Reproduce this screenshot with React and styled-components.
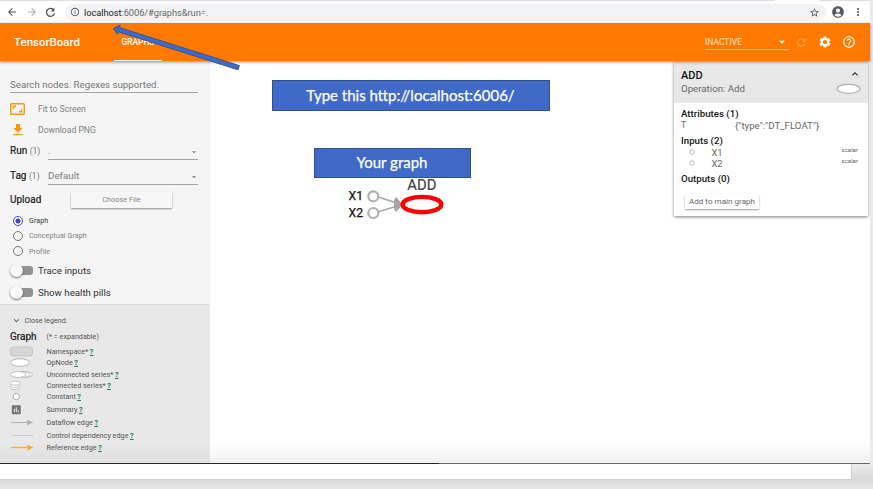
import React from 'react';
import styled, { createGlobalStyle } from 'styled-components';
import { MdSettings, MdHelpOutline, MdRefresh, MdAccountCircle, MdStarBorder, MdMoreVert, MdArrowBack, MdArrowForward, MdInfoOutline, MdFileDownload, MdKeyboardArrowDown, MdKeyboardArrowUp, MdArrowDropDown, MdAssessment } from 'react-icons/md';

const GlobalStyle = createGlobalStyle`
  * { box-sizing: border-box; }
  body { margin: 0; font-family: Roboto, sans-serif; background: #e4e4e4; overflow: hidden; }
  svg { display: block; flex: none; }
`;

const Desktop = styled.div`
  width: 873px;
  height: 489px;
  background: linear-gradient(#ebebeb 0 465px, #d9d9d9 478px, #e7e7e7 489px);
`;
const BrowserWindow = styled.div`
  position: relative;
  display: flex;
  flex-direction: column;
  width: 870px;
  height: 464px;
  background: #fff;
`;
const WindowEdge = styled.div`
  height: 1px;
  flex: none;
  background: linear-gradient(90deg, #26262c 0 439px, #6b6b6b 439px);
`;
const LowerSheet = styled.div`
  width: 852px;
  height: 16px;
  background: #fff;
  border-right: 1px solid #d0d0d0;
  border-bottom: 1px solid #cfcfcf;
`;

const TabStrip = styled.div`
  height: 1px;
  flex: none;
  background: linear-gradient(90deg, #dee0e6 0 775px, #fff 775px 820px, #dee0e6 820px);
`;
const AddressBar = styled.div`
  display: flex;
  align-items: center;
  height: 22px;
  flex: none;
  padding: 0 5px 0 6px;
  color: #55585c;
`;
const NavButton = styled.span`
  width: 19.5px;
  color: ${(p) => (p.$muted ? '#a9abae' : '#505357')};
`;
const UrlField = styled.div`
  display: flex;
  align-items: center;
  width: 761px;
  height: 17px;
  padding: 0 6px 0 5px;
  border-radius: 9px;
  background: #f1f3f4;
`;
const Url = styled.span`
  flex: 1;
  margin-left: 4.5px;
  font-size: 9.3px;
  letter-spacing: -0.06px;
  color: #65686c;
  b { font-weight: 400; color: #222428; }
`;
const BrowserActions = styled.div`
  display: flex;
  align-items: center;
  margin-left: 5px;
  gap: 7px;
`;

const AppHeader = styled.header`
  display: flex;
  align-items: center;
  height: 38px;
  flex: none;
  padding: 0 14px;
  background: #ff7800;
  color: #fff;
  box-shadow: 0 1px 3px rgba(0, 0, 0, 0.45);
  z-index: 1;
`;
const Brand = styled.div`
  width: 100px;
  font-size: 11.5px;
  font-weight: 500;
`;
const Tab = styled.div`
  width: 48px;
  height: 38px;
  line-height: 38px;
  text-align: center;
  font-size: 8.4px;
  font-weight: 500;
  border-bottom: 1.5px solid #fff;
`;
const StatusSelect = styled.div`
  display: flex;
  align-items: center;
  justify-content: space-between;
  width: 84px;
  height: 16px;
  margin-left: auto;
  padding-top: 1px;
  border-bottom: 1px solid #ffc999;
  font-size: 8.5px;
  color: #ffe4cc;
  svg { color: #fff; }
`;
const HeaderIcons = styled.div`
  display: flex;
  align-items: center;
  gap: 10px;
  margin: 0 0 0 6px;
  svg:first-child { opacity: 0.35; }
`;

const Body = styled.main`
  display: flex;
  flex: 1;
  min-height: 0;
`;
const Sidebar = styled.aside`
  width: 210px;
  flex: none;
  background: #f5f5f5;
`;
const Controls = styled.section`
  height: 243px;
  padding: 15px 12px 0 10px;
`;
const SearchField = styled.div`
  height: 17px;
  border-bottom: 1px solid #a3a3a3;
  font-size: 9.7px;
  line-height: 17px;
  color: #777;
`;
const ActionRow = styled.div`
  display: flex;
  align-items: center;
  height: 21px;
  color: #808080;
  font-size: 8.6px;
  & > span:first-child { width: 28px; color: #ff9800; }
`;
const Actions = styled.div`
  height: 42px;
  padding-top: 5px;
`;
const SelectRow = styled.div`
  display: flex;
  align-items: flex-end;
  height: 25px;
`;
const FieldLabel = styled.div`
  width: 38px;
  padding-bottom: 3px;
  font-size: 10px;
  line-height: 12px;
  color: #212121;
  -webkit-text-stroke: 0.2px;
  small { font-size: 8.5px; color: #777; -webkit-text-stroke: 0; }
`;
const SelectBox = styled.div`
  display: flex;
  flex: 1;
  align-items: center;
  justify-content: space-between;
  height: 17px;
  border-bottom: 1px solid #a3a3a3;
  font-size: 9.8px;
  line-height: 16px;
  color: #808080;
  svg { margin: 2px -1px 0 0; }
`;
const UploadRow = styled.div`
  display: flex;
  align-items: center;
  height: 16px;
  margin-top: 6.5px;
  font-size: 10px;
  color: #212121;
  -webkit-text-stroke: 0.2px;
  & > span { width: 61px; }
`;
const FileButton = styled.button`
  width: 101px;
  height: 16px;
  padding: 0;
  border: 0;
  border-radius: 1px;
  background: #f7f7f7;
  box-shadow: 0 1px 2px rgba(0, 0, 0, 0.42);
  font: 7.2px Roboto, sans-serif;
  letter-spacing: 0.1px;
  color: #858585;
  -webkit-text-stroke: 0;
`;
const RadioGroup = styled.div`
  padding: 5.5px 0 0 3px;
`;
const RadioOption = styled.div`
  display: flex;
  align-items: center;
  gap: 6px;
  height: 15.3px;
  font-size: 7.1px;
  letter-spacing: 0.08px;
  color: ${(p) => (p.$on ? '#333' : '#808080')};
`;
const RadioMark = styled.span`
  width: 10px;
  height: 10px;
  border-radius: 50%;
  border: 1.2px solid ${(p) => (p.$on ? '#4246c8' : '#777')};
  background: ${(p) => (p.$on ? 'radial-gradient(circle, #4246c8 0 2.2px, #fff 2.9px)' : 'transparent')};
`;
const ToggleRow = styled.div`
  display: flex;
  align-items: center;
  height: 22.5px;
  gap: 5px;
  font-size: 9.7px;
  color: #303030;
`;
const Track = styled.span`
  display: flex;
  align-items: center;
  width: 20px;
  height: 9px;
  margin-left: 3px;
  border-radius: 3px;
  background: #929292;
`;
const Knob = styled.span`
  width: 13px;
  height: 13px;
  margin-left: -3px;
  border-radius: 50%;
  background: #fafafa;
  box-shadow: 0 1px 2px rgba(0, 0, 0, 0.55);
`;

const Legend = styled.section`
  height: 159px;
  padding: 7px 10px;
  border-top: 1px solid #dadada;
  background: linear-gradient(#e8e8e8 0 138px, #dedede);
  color: #555;
  font-size: 7.2px;
`;
const LegendToggle = styled.div`
  display: flex;
  align-items: center;
  gap: 2.5px;
  height: 16px;
  padding-left: 1px;
`;
const LegendHeading = styled.div`
  display: flex;
  align-items: center;
  height: 16px;
  margin-bottom: 2px;
  strong { width: 36.5px; font-size: 10px; font-weight: 400; color: #212121; -webkit-text-stroke: 0.2px; }
`;
const LegendRow = styled.div`
  display: flex;
  align-items: center;
  height: ${(p) => p.$h}px;
  font-size: 7.25px;
  svg { margin-right: 11.5px; }
  u { margin-left: 1.5px; color: #1f7a4d; font-weight: 700; }
`;

const Canvas = styled.section`
  position: relative;
  flex: 1;
  background: linear-gradient(#fff 0 380px, #f1f1f1);
`;
const GraphDrawing = styled.svg`
  position: absolute;
  left: 130px;
  top: 115px;
  font-family: Roboto, sans-serif;
`;
const Callout = styled.div`
  position: absolute;
  left: ${(p) => p.$x}px;
  top: ${(p) => p.$y}px;
  width: ${(p) => p.$w}px;
  height: ${(p) => p.$h}px;
  line-height: ${(p) => p.$h - 3}px;
  padding-right: 1px;
  text-align: center;
  border: 1px solid #2f528f;
  background: #4169c8;
  color: #fff;
  font-family: Lato, sans-serif;
  font-size: 15px;
  -webkit-text-stroke: 0.25px;
`;
const ArrowOverlay = styled.svg`
  position: absolute;
  left: 108px;
  top: 20px;
  z-index: 2;
`;

const InfoCard = styled.article`
  position: absolute;
  right: 2px;
  top: 1px;
  width: 194px;
  height: 154px;
  background: #fff;
  box-shadow: 0 1px 3px rgba(0, 0, 0, 0.5);
  color: #666;
  font-size: 9px;
`;
const CardHeader = styled.header`
  display: flex;
  justify-content: space-between;
  height: 41px;
  padding: 7px 7px 0;
  background: #e8e8e8;
`;
const NodeTitle = styled.div`
  font-size: 9.7px;
  line-height: 13px;
  h2 { margin: 0; font-size: 11px; font-weight: 500; line-height: 13px; color: #151515; }
`;
const HeaderShapes = styled.div`
  display: flex;
  flex-direction: column;
  align-items: flex-end;
  svg:first-child { margin: -1px 0 3px; color: #222; }
`;
const CardBody = styled.div`
  padding: 4.5px 10px 0 7px;
`;
const GroupTitle = styled.h3`
  margin: ${(p) => p.$top || 0}px 0 0;
  font-size: 9.7px;
  line-height: 12px;
  font-weight: 500;
  color: #151515;
`;
const AttributeRow = styled.div`
  display: flex;
  line-height: 11px;
  font-size: 9.7px;
  span:first-child { width: 54px; font-size: 8.8px; }
`;
const InputRow = styled.div`
  display: flex;
  align-items: center;
  height: 11px;
  padding-left: 8px;
  font-size: 9.3px;
  span { margin-left: 16.5px; }
  small { margin-left: auto; padding-bottom: 5px; font-size: 6.1px; }
`;
const AddButton = styled.button`
  display: block;
  width: 74px;
  height: 15px;
  margin: 9px 0 0 4px;
  padding: 0;
  border: 0;
  border-radius: 1px;
  background: #fff;
  box-shadow: 0 1px 2px rgba(0, 0, 0, 0.38);
  font: 8.1px Roboto, sans-serif;
  color: #666;
`;

const ReloadIcon = () => (
  <svg width="11" height="11" viewBox="0 0 11 11" fill="none" stroke="currentColor" strokeWidth="1.3">
    <path d="M8.8 3.1A4 4 0 1 0 9.4 6.3" /><path d="M9.4 .8V4.5H5.7Z" fill="currentColor" stroke="none" />
  </svg>
);
const FitIcon = () => (
  <svg width="15" height="12" viewBox="0 0 15 12" fill="none" stroke="currentColor" strokeWidth="1.4">
    <rect x=".7" y=".7" width="13.6" height="10.6" rx="1" />
    <path d="M3.5 5.8V3.2H6M9 8.8h2.6V6.2" strokeWidth="1.5" />
  </svg>
);

const shapes = {
  namespace: <rect x=".5" y="1" width="22" height="9" rx="3" fill="#d6d6d6" stroke="#c4c4c4" />,
  op: <ellipse cx="10" cy="5.5" rx="9.3" ry="3.8" fill="#fff" stroke="#b5b5b5" />,
  unconnected: <g fill="#fff" stroke="#b5b5b5" strokeWidth=".9"><ellipse cx="15.5" cy="5.5" rx="7" ry="2.9" /><ellipse cx="12" cy="5.5" rx="8" ry="2.9" /><ellipse cx="8.2" cy="5.5" rx="7.7" ry="2.9" /></g>,
  connected: <g fill="#fff" stroke="#b5b5b5" strokeWidth=".8"><ellipse cx="5.3" cy="7.6" rx="4.9" ry="2" /><ellipse cx="5.3" cy="5.4" rx="4.9" ry="2" /><ellipse cx="5.3" cy="3.2" rx="4.9" ry="2" /></g>,
  constant: <circle cx="6.3" cy="5.5" r="3.2" fill="#fff" stroke="#aaa" />,
  summary: <MdAssessment x="0.3" y="-.3" size={12} color="#757575" />,
  dataflow: <g fill="#b5b5b5"><path d="M1 5.5H18" stroke="#b5b5b5" /><path d="M17 2.5 23.2 5.5 17 8.5Z" /></g>,
  control: <path d="M1.5 5.5H23" stroke="#bdbdbd" strokeDasharray="1.6 1" />,
  reference: <g fill="#ffae1a"><path d="M1 5.5H18" stroke="#ffae1a" strokeWidth="1.3" /><path d="M16.5 2.3 23.5 5.5 16.5 8.7 18 5.5Z" /></g>,
};
const legendItems = [
  ['namespace', 'Namespace*', 11], ['op', 'OpNode', 11.5], ['unconnected', 'Unconnected series*', 11],
  ['connected', 'Connected series*', 11], ['constant', 'Constant', 12], ['summary', 'Summary', 13.5],
  ['dataflow', 'Dataflow edge', 13], ['control', 'Control dependency edge', 12], ['reference', 'Reference edge', 13],
];

function GraphControls() {
  return (
    <Controls>
      <SearchField>Search nodes. Regexes supported.</SearchField>
      <Actions>
        <ActionRow><span><FitIcon /></span>Fit to Screen</ActionRow>
        <ActionRow><span><MdFileDownload size={16} /></span>Download PNG</ActionRow>
      </Actions>
      <SelectRow>
        <FieldLabel>Run <small>(1)</small></FieldLabel>
        <SelectBox>.<MdArrowDropDown size={10} /></SelectBox>
      </SelectRow>
      <SelectRow>
        <FieldLabel>Tag <small>(1)</small></FieldLabel>
        <SelectBox>Default<MdArrowDropDown size={10} /></SelectBox>
      </SelectRow>
      <UploadRow><span>Upload</span><FileButton>Choose File</FileButton></UploadRow>
      <RadioGroup>
        {['Graph', 'Conceptual Graph', 'Profile'].map((name, i) => (
          <RadioOption key={name} $on={i === 0}><RadioMark $on={i === 0} />{name}</RadioOption>
        ))}
      </RadioGroup>
      {['Trace inputs', 'Show health pills'].map((name) => (
        <ToggleRow key={name}><Track><Knob /></Track>{name}</ToggleRow>
      ))}
    </Controls>
  );
}

function GraphLegend() {
  return (
    <Legend>
      <LegendToggle><MdKeyboardArrowDown size={11} />Close legend.</LegendToggle>
      <LegendHeading><strong>Graph</strong>(* = expandable)</LegendHeading>
      {legendItems.map(([kind, label, h]) => (
        <LegendRow key={kind} $h={h}>
          <svg width="25" height="11" viewBox="0 0 25 11">{shapes[kind]}</svg>
          {label}<u>?</u>
        </LegendRow>
      ))}
    </Legend>
  );
}

function NodeInfo() {
  return (
    <InfoCard>
      <CardHeader>
        <NodeTitle><h2>ADD</h2>Operation: Add</NodeTitle>
        <HeaderShapes>
          <MdKeyboardArrowUp size={12} />
          <svg width="25" height="11" viewBox="0 0 25 11"><ellipse cx="12.5" cy="5.8" rx="11.5" ry="4.5" fill="#fff" stroke="#b0b0b0" strokeWidth="1.2" /></svg>
        </HeaderShapes>
      </CardHeader>
      <CardBody>
        <GroupTitle>Attributes (1)</GroupTitle>
        <AttributeRow><span>T</span><span>{'{"type":"DT_FLOAT"}'}</span></AttributeRow>
        <GroupTitle $top={4}>Inputs (2)</GroupTitle>
        {['X1', 'X2'].map((n) => (
          <InputRow key={n}>
            <svg width="6" height="6" viewBox="0 0 6 6"><circle cx="3" cy="3" r="2.3" fill="#fff" stroke="#aaa" strokeWidth=".8" /></svg>
            <span>{n}</span><small>scalar</small>
          </InputRow>
        ))}
        <GroupTitle $top={4}>Outputs (0)</GroupTitle>
        <AddButton>Add to main graph</AddButton>
      </CardBody>
    </InfoCard>
  );
}

export default function App() {
  return (
    <Desktop>
      <GlobalStyle />
      <BrowserWindow>
        <TabStrip />
        <AddressBar>
          <NavButton><MdArrowBack size={12} /></NavButton>
          <NavButton $muted><MdArrowForward size={12} /></NavButton>
          <NavButton><ReloadIcon /></NavButton>
          <UrlField>
            <MdInfoOutline size={10} />
            <Url><b>localhost</b>:6006/#graphs&amp;run=.</Url>
            <MdStarBorder size={11} />
          </UrlField>
          <BrowserActions><MdAccountCircle size={14} /><MdMoreVert size={12} /></BrowserActions>
        </AddressBar>
        <AppHeader>
          <Brand>TensorBoard</Brand>
          <Tab>GRAPHS</Tab>
          <StatusSelect>INACTIVE<MdArrowDropDown size={14} /></StatusSelect>
          <HeaderIcons><MdRefresh size={13} /><MdSettings size={14} /><MdHelpOutline size={14} /></HeaderIcons>
        </AppHeader>
        <Body>
          <Sidebar><GraphControls /><GraphLegend /></Sidebar>
          <Canvas>
            <GraphDrawing width="120" height="50" viewBox="340 176 120 50">
              <g fill="#a6a6a6" stroke="#a6a6a6" strokeWidth="1.5">
                <path d="M378 197 397 203M378 212 397 206" fill="none" />
                <path d="M394 200 396 197 403 204.5 396 212 394 209Z" stroke="none" />
              </g>
              <g fill="#fff" stroke="#b0b0b0" strokeWidth="2.2"><circle cx="373.3" cy="196.3" r="5" /><circle cx="373.3" cy="213" r="5" /></g>
              <ellipse cx="422" cy="204.6" rx="19.3" ry="7.7" fill="#fff" stroke="#f00" strokeWidth="4.4" />
              <g fill="#111" fontSize="12.2" stroke="#111" strokeWidth=".25"><text x="348.5" y="200">X1</text><text x="348.5" y="217">X2</text></g>
              <text x="407.3" y="190" fontSize="14.8" fill="#444" stroke="#444" strokeWidth=".2">ADD</text>
            </GraphDrawing>
            <Callout $x={62} $y={19} $w={278} $h={31}>Type this http://localhost:6006/</Callout>
            <Callout $x={104} $y={87} $w={157} $h={30}>Your graph</Callout>
            <NodeInfo />
          </Canvas>
        </Body>
        <WindowEdge />
        <ArrowOverlay width="136" height="54" viewBox="108 20 136 54">
          <path d="M113.5 28.5 120.2 25 119.5 27.6 239.4 65.6 238 69.8 118.3 31.8 117.5 34.3Z" fill="#4169c8" stroke="#2f528f" strokeWidth=".9" />
        </ArrowOverlay>
      </BrowserWindow>
      <LowerSheet />
    </Desktop>
  );
}
